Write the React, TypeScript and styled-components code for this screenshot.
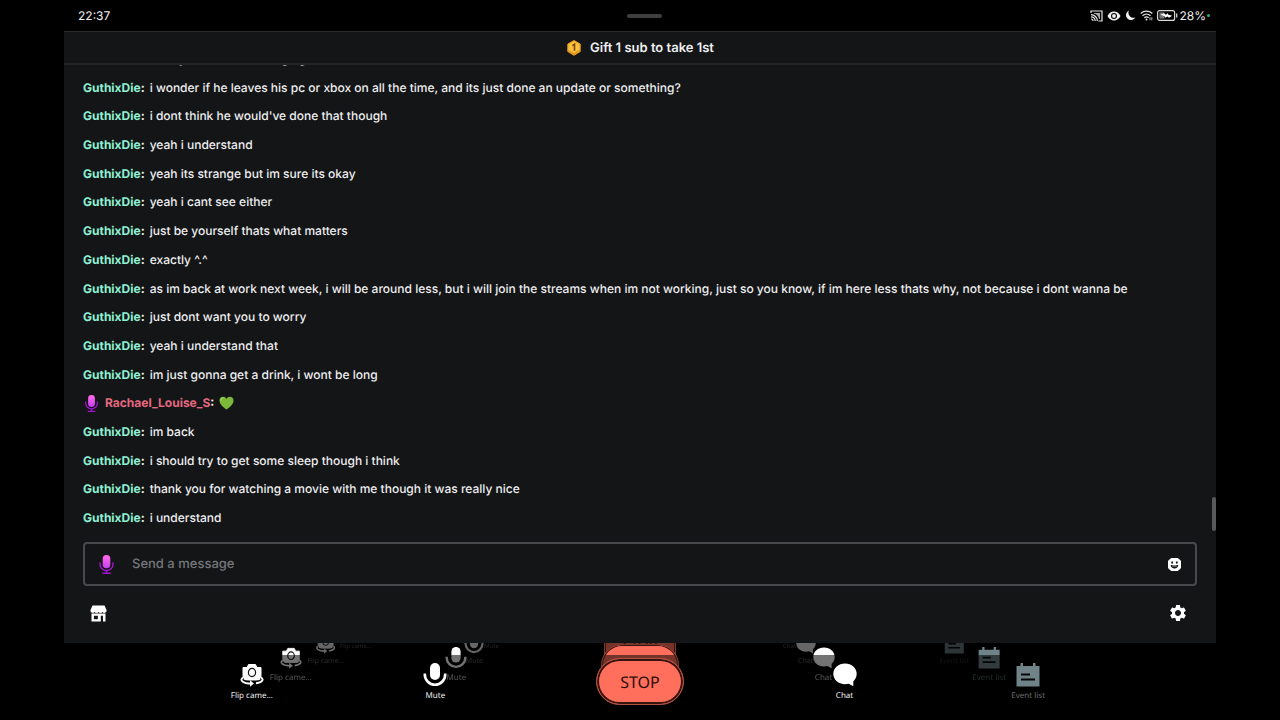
import React from "react";
import styled, { createGlobalStyle } from "styled-components";
import { MdSettings } from "react-icons/md";

const Global = createGlobalStyle`
  * { box-sizing: border-box; }
  body { margin: 0; background: #000; font-family: Inter, "Liberation Sans", sans-serif; color: #efeff1; text-rendering: geometricPrecision; }
  button { font: inherit; color: inherit; background: none; border: 0; padding: 0; cursor: pointer; text-rendering: inherit; }
  input { text-rendering: inherit; }
`;

const Page = styled.div`
  min-height: 100vh;
  display: flex;
  flex-direction: column;
  background: #000;
`;

const StatusBar = styled.header`
  display: grid;
  grid-template-columns: 1fr auto 1fr;
  align-items: center;
  height: 31px;
  margin: 0 5%;
  padding: 0 6px 0 14px;
  font-size: 12px;
  line-height: 16px;
`;

const Handle = styled.div`
  width: 35px;
  height: 4px;
  border-radius: 2px;
  background: #3f3f40;
`;

const StatusIcons = styled.div`
  display: flex;
  justify-content: flex-end;
  align-items: center;
  gap: 4px;
`;

const Battery = styled.span`
  display: flex;
  align-items: center;
  gap: 1px;
`;

const LiveDot = styled.span`
  width: 3px;
  height: 3px;
  border-radius: 50%;
  background: #2fae7c;
`;

const Panel = styled.main`
  position: relative;
  flex: 1;
  display: flex;
  flex-direction: column;
  margin: 0 5%;
  background: #141517;
`;

const GiftBar = styled.div`
  display: flex;
  justify-content: center;
  align-items: center;
  gap: 8px;
  height: 34px;
  border-top: 1px solid #2b2c2e;
  border-bottom: 2px solid #232426;
  font-size: 13px;
  font-weight: 600;
`;

const Messages = styled.section`
  flex: 1;
  display: flex;
  padding: 0 19px;
  overflow: hidden;
`;

const MessageList = styled.ul`
  flex: 1;
  display: flex;
  flex-direction: column;
  justify-content: space-between;
  margin: -16px 0 0;
  padding: 0;
  list-style: none;
`;

const Message = styled.li`
  display: flex;
  align-items: center;
  gap: 5px;
  height: 20px;
  font-size: 12px;
  font-weight: 500;
  line-height: 20px;
  white-space: nowrap;
`;

const Author = styled.strong<{ $color: string }>`
  font-weight: 700;
  span { color: ${(p) => p.$color}; }
`;

const ScrollThumb = styled.div`
  position: absolute;
  right: 0;
  bottom: 112px;
  width: 4px;
  height: 34px;
  border-radius: 2px;
  background: #58595b;
`;

const Composer = styled.form`
  display: flex;
  align-items: center;
  gap: 16px;
  height: 44px;
  margin: 14px 19px 0;
  padding: 0 14px 0 12px;
  border: 2px solid #47494c;
  border-radius: 4px;
`;

const MessageInput = styled.input`
  flex: 1;
  border: 0;
  outline: 0;
  padding: 0;
  background: transparent;
  color: #efeff1;
  font: 500 13px/20px Inter, sans-serif;
  &::placeholder { color: #75777b; opacity: 1; }
`;

const IconButton = styled.button`
  display: flex;
`;

const Tools = styled.div`
  display: flex;
  justify-content: space-between;
  align-items: center;
  height: 57px;
  padding: 0 28px 3px 26px;
  color: #fff;
`;

const Dock = styled.footer`
  position: relative;
  height: 77px;
  overflow: hidden;
  font-family: "Noto Sans", sans-serif;
`;

const Controls = styled.div`
  display: grid;
  grid-template-columns: 184fr 184fr 226fr 184fr 184fr;
  width: 75%;
  height: 100%;
  margin: 0 auto;
`;

const Cell = styled.div`
  position: relative;
  display: flex;
  justify-content: center;
  align-items: flex-start;
`;

const ControlButton = styled.button<{ $color: string }>`
  position: relative;
  display: flex;
  flex-direction: column;
  align-items: center;
  gap: 3px;
  padding-top: 20px;
  font-size: 8px;
  line-height: 12px;
  color: ${(p) => p.$color};
`;

const Caption = styled.span<{ $dim?: boolean }>`
  color: ${(p) => (p.$dim ? "#6d6d6d" : "#f2f2f2")};
`;

const Echo = styled.div<{ $x: number; $level: 1 | 2 | 3; $color: string }>`
  position: absolute;
  left: calc(50% + ${(p) => p.$x}px);
  top: ${(p) => [4, -9, -21][p.$level - 1]}px;
  display: flex;
  flex-direction: column;
  align-items: center;
  transform: translateX(-50%);
  gap: ${(p) => (p.$level === 1 ? 3 : 2)}px;
  color: ${(p) => p.$color};
  font-size: ${(p) => [8, 7, 6][p.$level - 1]}px;
  line-height: 12px;
  white-space: nowrap;
  svg {
    mask-image: ${(p) =>
      p.$level === 1
        ? "linear-gradient(#000 8px, rgba(0,0,0,.45) 8px)"
        : "linear-gradient(rgba(0,0,0,.4), rgba(0,0,0,.4))"};
  }
  span { opacity: ${(p) => [0.32, 0.15, 0.13][p.$level - 1]}; }
`;

const StopButton = styled.button`
  position: relative;
  width: 88px;
  height: 47px;
  margin-top: 15px;
  border: 1px solid #b05344;
  border-radius: 24px;
  background: #ff6f5c;
  box-shadow: inset 0 0 0 2px #37130f;
  color: #2b0e0a;
  font-size: 16px;
  line-height: 20px;
`;

const StopEcho = styled.div<{ $level: 1 | 2 }>`
  position: absolute;
  left: 50%;
  top: ${(p) => (p.$level === 1 ? 1 : -14)}px;
  transform: translateX(-50%);
  width: ${(p) => (p.$level === 1 ? 78 : 72)}px;
  height: ${(p) => (p.$level === 1 ? 42 : 38)}px;
  border: 1px solid #7a3a30;
  border-radius: ${(p) => (p.$level === 1 ? 21 : 8)}px;
  background: ${(p) =>
    p.$level === 1 ? "linear-gradient(#ff6f5c 10px, #753329 10px)" : "#753329"};
  box-shadow: inset 0 0 0 1px #37130f;
  color: #2b0e0a;
  text-align: center;
  font-size: 14px;
  line-height: ${(p) => (p.$level === 1 ? 40 : 32)}px;
`;

const HexBadge = () => (
  <svg width="16" height="16" viewBox="0 0 14 16" aria-hidden="true">
    <path d="M7 .5 13.2 4v7.6L7 15.3.8 11.600V4Z" fill="#e89a1c" stroke="#e89a1c" strokeLinejoin="round" />
    <path d="M7 1 12.500 4.200v5.600L7 13 1.500 9.800V4.200Z" fill="#fcc13f" />
    <path d="M5.400 5.600 7.500 4.300v6.400" fill="none" stroke="#7a4708" strokeWidth="1.600" />
  </svg>
);

const MicBadge = ({ size, id }: { size: number; id: string }) => (
  <svg width={size} height={size} viewBox="0 0 20 20" aria-hidden="true">
    <defs>
      <linearGradient id={id} x1="0" y1="0" x2="0" y2="1">
        <stop offset="0" stopColor="#ff6ee8" />
        <stop offset="1" stopColor="#c83df2" />
      </linearGradient>
    </defs>
    <rect x="6" y="0" width="8" height="14" rx="4" fill={`url(#${id})`} />
    <path d="M3.200 7.500V10a6.800 6.300 0 0 0 13.600 0V7.500" fill="none" stroke="#a312cf" strokeWidth="1.500" />
    <path d="M10 16.500V19M5.500 19.200h9" fill="none" stroke="#a312cf" strokeWidth="1.600" />
  </svg>
);

const GreenHeart = () => (
  <svg width="15" height="14" viewBox="0 0 15 14" role="img" aria-label="green heart">
    <path d="M7.500 13.500C4.500 11 .5 8.500.5 4.400.5 2.200 2 .8 4 .8c1.600 0 2.800.9 3.500 2.200C8.200 1.700 9.400.8 11 .8c2 0 3.500 1.400 3.500 3.600 0 4.100-4 6.600-7 9.100Z" fill="#7cb93a" />
    <path d="M2 4.200C2 3 2.900 2 4.200 2" stroke="#a8d863" strokeWidth="1.200" fill="none" strokeLinecap="round" />
  </svg>
);

const ShopIcon = () => (
  <svg width="17" height="17" viewBox="0 0 17 17" fill="currentColor" aria-hidden="true">
    <path d="M2.500.5h12L16.500 5v1.200a2.200 2 0 0 1-4 .8 2.300 2 0 0 1-4 0 2.300 2 0 0 1-4 0 2.200 2 0 0 1-4-.8V5Z" />
    <path fillRule="evenodd" d="M1.500 8.500h14v8H13v-5.700h-2.200v5.700H1.500Zm2.400 2.300v3.500h4v-3.500Z" />
  </svg>
);

const EmoteIcon = () => (
  <svg width="13" height="13" viewBox="0 0 13 13" aria-hidden="true">
    <path d="M3 .5h7L12.500 3v7L10 12.500H3L.5 10V3Z" fill="#fff" stroke="#fff" strokeLinejoin="round" />
    <path d="M3.300 3.500h1.800v2H3.300zM7.900 3.500h1.800v2H7.900zM2.800 7h7.400c0 2-1.500 3.500-3.700 3.500S2.800 9 2.800 7Z" fill="#141517" />
    <path d="M4.300 7.900h4.400" stroke="#fff" strokeWidth=".8" />
  </svg>
);

const CastIcon = () => (
  <svg width="13" height="12" viewBox="0 0 13 12" fill="none" stroke="#e6e6e6" strokeWidth="1.200" aria-hidden="true">
    <path d="M1 3V1h11v10H8.500" />
    <path d="M1 4.600A6.400 6.400 0 0 1 7.400 11M1 6.800A4.200 4.200 0 0 1 5.200 11M1 9a2 2 0 0 1 2 2" />
    <path d="M4 3h6v6H9C8.500 6 7 4.300 4 3.800Z" fill="#aaa" stroke="none" />
  </svg>
);

const EyeIcon = () => (
  <svg width="14" height="10" viewBox="0 0 14 10" aria-hidden="true">
    <path d="M.5 5C2 2 4.300.6 7 .6S12 2 13.500 5C12 8 9.700 9.400 7 9.400S2 8 .5 5Z" fill="#f1f1f1" />
    <circle cx="7" cy="5" r="3" fill="#000" />
    <circle cx="7" cy="5" r="1.900" fill="#f1f1f1" />
  </svg>
);

const MoonIcon = () => (
  <svg width="11" height="11" viewBox="0 0 11 11" aria-hidden="true">
    <path d="M4 .5A5 5 0 1 0 10.500 7.300 5 5 0 0 1 4 .5Z" fill="#f1f1f1" />
  </svg>
);

const WifiIcon = () => (
  <svg width="13" height="11" viewBox="0 0 13 11" fill="none" stroke="#e3e3e3" strokeWidth="1.200" aria-hidden="true">
    <path d="M.7 3.500a8.500 8.500 0 0 1 11.600 0M2.500 5.700a6 6 0 0 1 8 0M4.300 7.800a3.400 3.400 0 0 1 4.400 0" />
    <circle cx="6.500" cy="9.600" r="1" fill="#e3e3e3" stroke="none" />
    <path d="M10 7.300v3M11.800 7.300v3" strokeWidth=".8" />
  </svg>
);

const BatteryIcon = () => (
  <svg width="21" height="11" viewBox="0 0 21 11" aria-hidden="true">
    <rect x=".6" y=".6" width="17" height="9.800" rx="2" fill="none" stroke="#d8d8d8" strokeWidth="1.200" />
    <rect x="2.400" y="2.400" width="5" height="6.200" fill="#777" />
    <path d="m3.500 4.500 3.500-1.300 1.800 1.500 2-1.400.6 1.500 3.800 1-3.200 2-1.600-1.300-2 1.300-.9-1.600Z" fill="#fff" />
    <path d="M19.700 3.500v4" stroke="#d8d8d8" strokeWidth="1.300" />
  </svg>
);

type IconProps = { size: number };

const CameraIcon = ({ size }: IconProps) => (
  <svg width={size} height={size} viewBox="0 0 24 24" aria-hidden="true">
    <path d="M3 4.500h4L8.500 1.500h7L17 4.500h4V17H3Z" fill="currentColor" strokeLinejoin="round" stroke="currentColor" />
    <ellipse cx="12" cy="9.500" rx="3.600" ry="4.200" fill="none" stroke="#111" strokeWidth="1.200" />
    <path d="M2.500 14C-1 17 3 20.500 11 20.500M21.500 14c3 2.500 1 5.300-5 6.300" fill="none" stroke="#000" strokeWidth="4.500" />
    <path d="M3 14.500C-1 17 3 20.500 11 20.500M21 14.500c3.500 2 1 5-5 5.800" fill="none" stroke="currentColor" strokeWidth="1.900" />
    <path d="m10 17.300 4 3.200-4 3.200Z" fill="currentColor" />
  </svg>
);

const MuteIcon = ({ size }: IconProps) => (
  <svg width={size} height={size} viewBox="0 0 24 24" aria-hidden="true">
    <rect x="7" y="0" width="10" height="17" rx="5" fill="currentColor" />
    <path d="M1.800 10.500v1a10.200 10.200 0 0 0 20.400 0v-1" fill="none" stroke="currentColor" strokeWidth="2.600" />
  </svg>
);

const ChatIcon = ({ size }: IconProps) => (
  <svg width={size} height={size} viewBox="0 0 24 24" aria-hidden="true">
    <path d="M12 .5c6.500 0 11.700 4.400 11.700 10.300 0 3.200-1.400 5.700-3.400 7.600V23.300L15.700 20.800c-1.100.3-2.400.4-3.700.4C5.500 21.200.3 16.700.3 10.800S5.500.5 12 .5Z" fill="currentColor" />
  </svg>
);

const EventIcon = ({ size }: IconProps) => (
  <svg width={size} height={size} viewBox="0 0 24 24" aria-hidden="true">
    <path d="M.5 3h4V0H7v3h10V0h2.500v3h4v20.500H.5Z" fill="currentColor" />
    <path d="M5 11.500h9M5 16.500h14" stroke="#050708" strokeWidth="2" />
  </svg>
);

const messages = [
  "nearly at the end of singing",
  "i wonder if he leaves his pc or xbox on all the time, and its just done an update or something?",
  "i dont think he would've done that though",
  "yeah i understand",
  "yeah its strange but im sure its okay",
  "yeah i cant see either",
  "just be yourself thats what matters",
  "exactly ^.^",
  "as im back at work next week, i will be around less, but i will join the streams when im not working, just so you know, if im here less thats why, not because i dont wanna be",
  "just dont want you to worry",
  "yeah i understand that",
  "im just gonna get a drink, i wont be long",
  null,
  "im back",
  "i should try to get some sleep though i think",
  "thank you for watching a movie with me though it was really nice",
  "i understand",
];

type ControlProps = {
  icon: (p: IconProps) => React.ReactElement;
  label: string;
  color?: string;
  shifts: [number, number, number];
};

const Control = ({ icon: Icon, label, color = "#fff", shifts }: ControlProps) => {
  const dim = color !== "#fff";
  const levels = dim ? ([2, 1] as const) : ([3, 2, 1] as const);
  return (
    <Cell>
      {levels.map((level) => (
        <Echo key={level} $x={shifts[level - 1]} $level={level} $color={color} aria-hidden="true">
          <Icon size={[22, 20, 16][level - 1]} />
          <span>{label}</span>
        </Echo>
      ))}
      <ControlButton type="button" $color={color}>
        <Icon size={24} />
        <Caption $dim={dim}>{label}</Caption>
      </ControlButton>
    </Cell>
  );
};

export default function App() {
  return (
    <Page>
      <Global />
      <StatusBar>
        <time>22:37</time>
        <Handle />
        <StatusIcons>
          <CastIcon />
          <EyeIcon />
          <MoonIcon />
          <WifiIcon />
          <Battery>
            <BatteryIcon />
            <span>28%</span>
            <LiveDot />
          </Battery>
        </StatusIcons>
      </StatusBar>
      <Panel>
        <GiftBar>
          <HexBadge />
          <span>Gift 1 sub to take 1st</span>
        </GiftBar>
        <Messages aria-label="Chat">
          <MessageList>
            {messages.map((text, i) =>
              text === null ? (
                <Message key={i}>
                  <MicBadge size={17} id="mic-message" />
                  <Author $color="#e5687f"><span>Rachael_Louise_S</span>:</Author>
                  <GreenHeart />
                </Message>
              ) : (
                <Message key={i}>
                  <Author $color="#8ff0d4"><span>GuthixDie</span>:</Author>
                  <span>{text}</span>
                </Message>
              )
            )}
          </MessageList>
        </Messages>
        <ScrollThumb />
        <Composer onSubmit={(e) => e.preventDefault()}>
          <MicBadge size={19} id="mic-composer" />
          <MessageInput aria-label="Send a message" placeholder="Send a message" />
          <IconButton type="button" aria-label="Emotes"><EmoteIcon /></IconButton>
        </Composer>
        <Tools>
          <IconButton type="button" aria-label="Shop"><ShopIcon /></IconButton>
          <IconButton type="button" aria-label="Settings"><MdSettings size={20} /></IconButton>
        </Tools>
      </Panel>
      <Dock>
        <Controls>
          <Control icon={CameraIcon} label="Flip came…" shifts={[39, 74, 104]} />
          <Control icon={MuteIcon} label="Mute" shifts={[21, 39, 56]} />
          <Cell>
            <StopEcho $level={2} aria-hidden="true">STOP</StopEcho>
            <StopEcho $level={1} aria-hidden="true">STOP</StopEcho>
            <StopButton type="button">STOP</StopButton>
          </Cell>
          <Control icon={ChatIcon} label="Chat" shifts={[-21, -39, -55]} />
          <Control icon={EventIcon} label="Event list" color="#6f8388" shifts={[-39, -74, -104]} />
        </Controls>
      </Dock>
    </Page>
  );
}
